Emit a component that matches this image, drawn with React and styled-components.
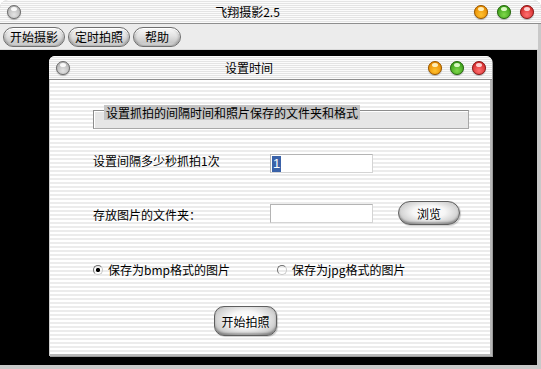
import React from "react";
import styled, { createGlobalStyle } from "styled-components";

const Global = createGlobalStyle`
  html, body { margin: 0; padding: 0; background: #fff; }
  body { font-family: "Noto Sans CJK SC", "Liberation Sans", sans-serif; font-size: 12px; color: #000; }
`;

const stripes = `repeating-linear-gradient(to bottom, #ffffff 0px, #ffffff 2px, #ececec 2px, #ececec 4px)`;
const titleStripes = `repeating-linear-gradient(to bottom, #fbfbfb 0px, #fbfbfb 1px, #e4e4e4 1px, #e4e4e4 2px)`;

const Window = styled.div`
  width: 541px;
  height: 369px;
  display: flex;
  flex-direction: column;
  background: #c9c9c9;
  border-radius: 8px 8px 0 0;
  overflow: hidden;
`;

const TitleBar = styled.div`
  height: 23px;
  flex: none;
  display: flex;
  align-items: center;
  padding: 0 ${(p) => (p.$small ? 6 : 7)}px 0 7px;
  background: ${titleStripes};
  border-bottom: 1px solid #8e8e8e;
  border-radius: ${(p) => (p.$small ? "6px 6px 0 0" : "8px 8px 0 0")};
`;

const Title = styled.div`
  flex: 1;
  text-align: center;
  font-size: 12px;
  line-height: 14px;
  color: #000;
`;

const Lights = styled.div`
  display: flex;
  gap: ${(p) => p.$gap}px;
`;

const palette = {
  gray: ["#ffffff", "#e4e4e4", "#b4b4b4", "#6e6e6e"],
  orange: ["#fff6c8", "#ffc230", "#e88a00", "#9a5a00"],
  green: ["#e8ffd0", "#7fd84a", "#3a9e1a", "#2a6a10"],
  red: ["#ffe0e0", "#ff7070", "#d42a2a", "#8a1a1a"],
};

const Light = styled.span`
  width: 14px;
  height: 14px;
  border-radius: 50%;
  box-sizing: border-box;
  border: 1px solid ${(p) => palette[p.$c][3]};
  background: radial-gradient(circle at 50% 72%, ${(p) => palette[p.$c][1]} 0%, ${(p) => palette[p.$c][2]} 78%),
    ${(p) => palette[p.$c][2]};
  position: relative;
  box-shadow: 0 1px 1px rgba(0, 0, 0, 0.25);
  &::after {
    content: "";
    position: absolute;
    left: 3px;
    top: 1px;
    width: 6px;
    height: 4px;
    border-radius: 50%;
    background: ${(p) => palette[p.$c][0]};
    opacity: 0.9;
  }
`;

const Toolbar = styled.div`
  height: 25px;
  flex: none;
  display: flex;
  align-items: center;
  gap: 3px;
  padding: 0 3px;
  margin-right: 3px;
  background: #ececec;
  border-bottom: 1px solid #d8d8d8;
`;

const PillButton = styled.button`
  height: 20px;
  padding: 0 ${(p) => p.$pad}px;
  border: 1px solid #6e6e6e;
  border-radius: 10px;
  background: linear-gradient(to bottom, #fafafa 0%, #e2e2e2 45%, #c9c9c9 80%, #dedede 100%);
  box-shadow: inset 0 1px 0 #fff, inset 2px 0 2px rgba(0, 0, 0, 0.12), inset -2px 0 2px rgba(0, 0, 0, 0.12),
    inset 0 -1px 2px rgba(0, 0, 0, 0.15);
  font-family: inherit;
  font-size: 12px;
  line-height: 16px;
  color: #000;
  cursor: default;
`;

const Desktop = styled.div`
  flex: 1;
  background: #000;
  margin: 0 4px 4px 0;
  padding: 6px 0 0 49px;
  box-sizing: border-box;
`;

const Dialog = styled.div`
  width: 443px;
  height: 300px;
  display: flex;
  flex-direction: column;
  background: #fff;
  border-radius: 6px 6px 0 0;
  box-shadow: 1px 1px 0 #9a9a9a;
`;

const DialogBody = styled.div`
  flex: 1;
  background: ${stripes};
  padding: 30px 0 0 43px;
  border-left: 1px solid #cfcfcf;
  border-right: 2px solid #b8b8b8;
  border-bottom: 2px solid #b8b8b8;
  box-sizing: border-box;
`;

const Group = styled.div`
  position: relative;
  width: 376px;
  height: 19px;
  box-sizing: border-box;
  border: 1px solid #8c8c8c;
  border-right-color: #a8a8a8;
  border-bottom-color: #a8a8a8;
  box-shadow: inset 1px 1px 0 #fff;
  background: #e6e6e6;
`;

const Legend = styled.span`
  position: absolute;
  left: 10px;
  top: -6px;
  padding: 0 2px;
  background: #c4c4c4;
  font-size: 12px;
  line-height: 15px;
`;

const Row = styled.div`
  display: flex;
  align-items: center;
  margin-top: ${(p) => p.$mt}px;
`;

const Label = styled.span`
  width: 177px;
  flex: none;
  font-size: 12px;
  line-height: 14px;
  position: relative;
  top: ${(p) => p.$dy || 0}px;
`;

const TextBox = styled.div`
  width: 103px;
  height: 19px;
  box-sizing: border-box;
  background: #fff;
  border: 1px solid #b4b4b4;
  border-bottom-color: #d4d4d4;
  border-right-color: #d4d4d4;
  padding: 1px 0 0 1px;
  display: flex;
  align-items: flex-start;
`;

const Selected = styled.span`
  background: #3a62a8;
  color: #fff;
  font-family: "Liberation Sans", sans-serif;
  font-size: 13px;
  line-height: 16px;
  padding: 0 1px;
`;

const AquaButton = styled.button`
  width: ${(p) => p.$w}px;
  height: ${(p) => p.$h}px;
  margin-left: ${(p) => p.$ml || 0}px;
  border: 1px solid #5e5e5e;
  border-radius: ${(p) => p.$r}px;
  background: radial-gradient(ellipse at 50% 45%, #ffffff 0%, #f6f6f6 38%, #cfcfcf 72%, #8e8e8e 100%);
  box-shadow: inset 0 -2px 2px rgba(0, 0, 0, 0.25), 1px 1px 1px rgba(0, 0, 0, 0.2);
  font-family: inherit;
  font-size: 12px;
  color: #000;
  padding: 0;
  cursor: default;
`;

const RadioItem = styled.label`
  width: 184px;
  flex: none;
  display: flex;
  align-items: center;
  gap: 5px;
  font-size: 12px;
  line-height: 14px;
`;

const RadioDot = styled.span`
  width: 10px;
  height: 10px;
  border-radius: 50%;
  box-sizing: border-box;
  border: 1px solid #c8c8c8;
  border-top-color: #6e6e6e;
  border-left-color: #6e6e6e;
  background: ${(p) => (p.$on ? "radial-gradient(circle, #000 0 1.8px, transparent 2.4px)" : "transparent")};
`;

export default function App() {
  return (
    <>
      <Global />
      <Window>
        <TitleBar>
          <Light $c="gray" />
          <Title>飞翔摄影2.5</Title>
          <Lights $gap={9}>
            <Light $c="orange" />
            <Light $c="green" />
            <Light $c="red" />
          </Lights>
        </TitleBar>
        <Toolbar>
          <PillButton $pad={6}>开始摄影</PillButton>
          <PillButton $pad={6}>定时拍照</PillButton>
          <PillButton $pad={11}>帮助</PillButton>
        </Toolbar>
        <Desktop>
          <Dialog>
            <TitleBar $small>
              <Light $c="gray" />
              <Title>设置时间</Title>
              <Lights $gap={8}>
                <Light $c="orange" />
                <Light $c="green" />
                <Light $c="red" />
              </Lights>
            </TitleBar>
            <DialogBody>
              <Group>
                <Legend>设置抓拍的间隔时间和照片保存的文件夹和格式</Legend>
              </Group>
              <Row $mt={25}>
                <Label $dy={-3}>设置间隔多少秒抓拍1次</Label>
                <TextBox>
                  <Selected>1</Selected>
                </TextBox>
              </Row>
              <Row $mt={28}>
                <Label $dy={2}>存放图片的文件夹：</Label>
                <TextBox />
                <AquaButton $w={62} $h={24} $r={12} $ml={25}>
                  浏览
                </AquaButton>
              </Row>
              <Row $mt={38}>
                <RadioItem>
                  <RadioDot $on />
                  保存为bmp格式的图片
                </RadioItem>
                <RadioItem>
                  <RadioDot />
                  保存为jpg格式的图片
                </RadioItem>
              </Row>
              <Row $mt={29}>
                <AquaButton $w={63} $h={30} $r={10} $ml={121}>
                  开始拍照
                </AquaButton>
              </Row>
            </DialogBody>
          </Dialog>
        </Desktop>
      </Window>
    </>
  );
}
